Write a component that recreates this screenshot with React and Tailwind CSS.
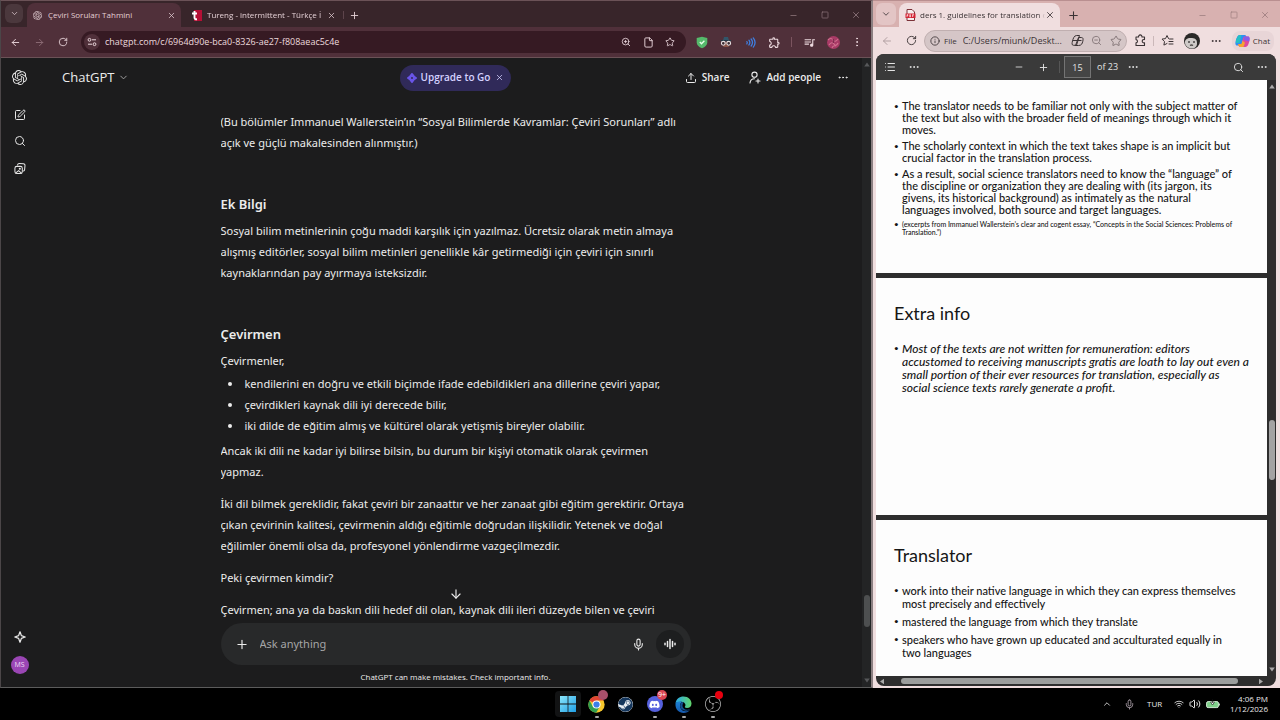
import {
  ArrowDown,
  ArrowLeft,
  ArrowRight,
  ChevronDown,
  ChevronUp,
  Ellipsis,
  EllipsisVertical,
  File,
  Info,
  List,
  Mic,
  Minus,
  Plus,
  RotateCw,
  Search,
  Square,
  SquarePen,
  Star,
  Upload,
  Volume2,
  Wifi,
  X,
  ZoomIn,
  ZoomOut,
} from "lucide-react";
import { FaDiscord, FaSteam } from "react-icons/fa";
import { MdOutlineExtension, MdOutlineQueueMusic } from "react-icons/md";
import { SiObsstudio, SiOpenai } from "react-icons/si";

const notes = {
  intro: [
    "(Bu bölümler Immanuel Wallerstein’ın “Sosyal Bilimlerde Kavramlar: Çeviri Sorunları” adlı",
    "açık ve güçlü makalesinden alınmıştır.)",
  ],
  extra: [
    "Sosyal bilim metinlerinin çoğu maddi karşılık için yazılmaz. Ücretsiz olarak metin almaya",
    "alışmış editörler, sosyal bilim metinleri genellikle kâr getirmediği için çeviri için sınırlı",
    "kaynaklarından pay ayırmaya isteksizdir.",
  ],
  translator: [
    "kendilerini en doğru ve etkili biçimde ifade edebildikleri ana dillerine çeviri yapar,",
    "çevirdikleri kaynak dili iyi derecede bilir,",
    "iki dilde de eğitim almış ve kültürel olarak yetişmiş bireyler olabilir.",
  ],
  however: [
    "Ancak iki dili ne kadar iyi bilirse bilsin, bu durum bir kişiyi otomatik olarak çevirmen",
    "yapmaz.",
  ],
  craft: [
    "İki dil bilmek gereklidir, fakat çeviri bir zanaattır ve her zanaat gibi eğitim gerektirir. Ortaya",
    "çıkan çevirinin kalitesi, çevirmenin aldığı eğitimle doğrudan ilişkilidir. Yetenek ve doğal",
    "eğilimler önemli olsa da, profesyonel yönlendirme vazgeçilmezdir.",
  ],
};

const context = [
  [
    "The translator needs to be familiar not only with the subject matter of",
    "the text but also with the broader field of meanings through which it",
    "moves.",
  ],
  [
    "The scholarly context in which the text takes shape is an implicit but",
    "crucial factor in the translation process.",
  ],
  [
    "As a result, social science translators need to know the “language” of",
    "the discipline or organization they are dealing with (its jargon, its",
    "givens, its historical background) as intimately as the natural",
    "languages involved, both source and target languages.",
  ],
];

const remuneration = [
  "Most of the texts are not written for remuneration: editors",
  "accustomed to receiving manuscripts gratis are loath to lay out even a",
  "small portion of their ever resources for translation, especially as",
  "social science texts rarely generate a profit.",
];

const translator = [
  [
    "work into their native language in which they can express themselves",
    "most precisely and effectively",
  ],
  ["mastered the language from which they translate"],
  [
    "speakers who have grown up educated and acculturated equally in",
    "two languages",
  ],
];

function Lines({ of }) {
  return of.map((line) => (
    <span key={line} className="block whitespace-nowrap">
      {line}
    </span>
  ));
}

function IconButton({ label, className = "w-6", children }) {
  return (
    <button type="button" aria-label={label} className={`flex shrink-0 items-center justify-center ${className}`}>
      {children}
    </button>
  );
}

function WindowControls({ className }) {
  return (
    <div className={`ml-auto flex ${className}`}>
      <IconButton label="Minimize" className="w-[31px]">
        <Minus size={9} />
      </IconButton>
      <IconButton label="Maximize" className="w-[31px]">
        <Square size={8} />
      </IconButton>
      <IconButton label="Close" className="w-[31px]">
        <X size={10} />
      </IconButton>
    </div>
  );
}

function SiteSettingsIcon() {
  return (
    <svg width="10" height="10" viewBox="0 0 10 10" fill="none" stroke="currentColor">
      <circle cx="2.5" cy="2.8" r="1.4" />
      <path d="M5 2.8h4M1 7.2h4" />
      <circle cx="7.5" cy="7.2" r="1.4" />
    </svg>
  );
}

function ShieldIcon() {
  return (
    <svg width="12" height="13" viewBox="0 0 12 13">
      <path d="M6 .8 11.3 2v4.2c0 2.8-2 4.8-5.3 6.1C2.7 11 .7 9 .7 6.2V2Z" fill="#55b96b" />
      <path d="m3.800 6 1.700 1.700 2.900-3" fill="none" stroke="#e7ffe9" strokeWidth="1.3" />
    </svg>
  );
}

function SpyIcon() {
  return (
    <svg width="12" height="12" viewBox="0 0 12 12">
      <path d="M3 4.500 4 1h4l1 3.500Z" fill="#31566a" />
      <path d="M.8 4.600h10.400" stroke="#243845" strokeWidth="1.2" />
      <path d="M2 6h8l-1.500 5H3.500Z" fill="#8a5347" />
      <circle cx="3.3" cy="7.3" r="1.9" fill="#3a2a30" stroke="#e8e0e2" strokeWidth="1.1" />
      <circle cx="8.7" cy="7.3" r="1.9" fill="#3a2a30" stroke="#e8e0e2" strokeWidth="1.1" />
    </svg>
  );
}

function SoundWavesIcon() {
  return (
    <svg width="11" height="11" viewBox="0 0 12 12" fill="none" stroke="#3f7fe0" strokeWidth="1.4" strokeLinecap="round">
      <path d="M2 5q1 1 0 2.500M4.300 3.500q2 2.500 0 5.200M6.700 2.200q3 3.800 0 7.600M9 1q4 5 0 10" />
    </svg>
  );
}

function PuzzleIcon() {
  return (
    <svg width="13" height="13" viewBox="0 0 13 13" fill="none" stroke="currentColor" strokeWidth="1.1" strokeLinejoin="round">
      <path d="M2 3h2.600a1.700 1.700 0 1 1 3.300 0h2.600v2.600a1.700 1.700 0 1 0 0 3.200v2.700H2V8.900c2-.3 2-3 0-3.300Z" />
    </svg>
  );
}

function FavoritesIcon() {
  return (
    <svg width="13" height="13" viewBox="0 0 13 13" fill="none" stroke="currentColor" strokeLinejoin="round" strokeLinecap="round">
      <path d="M7.500 4.500 6 1.500 4.500 4.600 1 5.100l2.500 2.500-.6 3.500L6 9.500M8.500 5h3.500M8 7.500h4M8 10h4" />
    </svg>
  );
}

function BrainIcon() {
  return (
    <svg width="13" height="13" viewBox="0 0 13 13" fill="none" stroke="currentColor" strokeLinejoin="round">
      <path d="M5.500 1.500h3l-3 9.800h-3c-2 0-1.500-2.300-1-4.300S3 1.500 5.500 1.500ZM7.500 11.500h-3l3-8h2.800c2 0 2 1.500 1.500 3.800-.6 2.400-1.300 4.200-4.300 4.200ZM2 6.500h8.500" />
    </svg>
  );
}

function CopilotIcon() {
  return (
    <svg width="15" height="14" viewBox="0 0 15 14">
      <path d="M4.500 1h5c1 0 1.600.6 2 1.800L12 4H8.500L7 9.500C6.500 11 6 11.500 5 11.500H2C.2 11.500.1 9 .8 6.500 1.600 3.500 2.500 1 4.500 1Z" fill="#2f8ff0" />
      <path d="M1 6 3 2q.6-1 1.500-1h2L4.500 9 1 9Z" fill="#25bfc4" />
      <path d="M10.500 13h-5c-1 0-1.600-.6-2-1.800L3.200 10h3.300L8 4.500C8.500 3 9 2.500 10 2.500h3c1.800 0 1.900 2.500 1.200 5-.8 3-1.700 5.500-3.700 5.500Z" fill="#e0489b" />
      <path d="M3.200 10h3.300l1-3.300 2.500 2-1.500 4.300h-3c-1 0-1.600-.6-2-1.800Z" fill="#f5a52f" />
      <path d="M9 3.200q.5-.7 1-.7h3c1.800 0 1.900 2.500 1.200 5L9 6Z" fill="#8a5be8" />
    </svg>
  );
}

function PdfIcon() {
  return (
    <svg width="11" height="12" viewBox="0 0 11 12">
      <path d="M2 .5h5L9.500 3v8.500H2Z" fill="#f7eeee" stroke="#7b3238" />
      <path d="M.5 4.500h10v4.500H.5Z" fill="#d32535" />
      <path d="M2 8V5.600h1v1H2M4.700 5.600V8h.8V5.600ZM7.500 8V5.600h1.500M7.500 6.800h1.200" fill="none" stroke="#fff" strokeWidth=".6" />
    </svg>
  );
}

function TurengIcon() {
  return (
    <svg width="11" height="11" viewBox="0 0 11 11">
      <path d="M3 0h8v11H3Z" fill="#b50f35" />
      <path d="M3.500 1v6.500q0 2 2.500 1.800M1 3.500h5" fill="none" stroke="#fff" strokeWidth="1.9" />
    </svg>
  );
}

function LibraryIcon() {
  return (
    <svg width="13" height="13" viewBox="0 0 13 13" fill="none" stroke="currentColor" strokeWidth="1.1" strokeLinecap="round" strokeLinejoin="round">
      <rect x="1" y="4.2" width="8" height="7.8" rx="2" />
      <path d="M3.800 2.700q.4-1.700 2-1.600l4.400.3q1.900.2 1.700 2l-.4 4.300q-.2 1.300-1.200 1.600M2 11.300l3-2.600 3 2.800" />
      <circle cx="6.3" cy="6.8" r=".6" />
    </svg>
  );
}

function AddPersonIcon() {
  return (
    <svg width="12" height="13" viewBox="0 0 12 13" fill="none" stroke="currentColor" strokeWidth="1.1" strokeLinecap="round">
      <circle cx="5.5" cy="3.7" r="2.6" />
      <path d="M1 12c.2-2.800 1.800-4.300 4.500-4.300M9 8v4M7 10h4" />
    </svg>
  );
}

function ChromeAvatar() {
  return (
    <svg width="13" height="13" viewBox="0 0 13 13">
      <circle cx="6.5" cy="6.5" r="6.5" fill="#a83a66" />
      <path d="M1 4q3-3 5 0t5-1M2 9q3-4 5-1t4-1M5 12q1-3 4-2" fill="none" stroke="#d0708f" strokeWidth="1.2" />
      <path d="M6 3q2 2 0 4" fill="none" stroke="#6d1f42" />
    </svg>
  );
}

function EdgeAvatar() {
  return (
    <svg width="16" height="16" viewBox="0 0 16 16">
      <circle cx="8" cy="8" r="8" fill="#2b2928" />
      <path d="M1 10C.5 6 4 4.500 8 5s5 2 5 5.500-2.500 5-5 5-6.500-1.500-7-5.500Z" fill="#cfcac8" />
      <path d="M4 9h2M9 9h2M6 12.500q1.500-1 3 0" stroke="#4b4745" strokeWidth="1.3" fill="none" />
    </svg>
  );
}

function WindowsIcon() {
  return (
    <svg width="16" height="16" viewBox="0 0 16 16">
      <defs>
        <linearGradient id="win" x2="1" y2="1">
          <stop stopColor="#8be6fb" />
          <stop offset="1" stopColor="#1f9fe6" />
        </linearGradient>
      </defs>
      <path d="M0 0h7.600v7.600H0ZM8.400 0H16v7.600H8.400ZM0 8.400h7.600V16H0ZM8.400 8.400H16V16H8.400Z" fill="url(#win)" />
    </svg>
  );
}

function ChromeIcon() {
  return (
    <svg width="17" height="17" viewBox="0 0 48 48">
      <circle cx="24" cy="24" r="23" fill="#f7c72c" />
      <path d="M24 24 4 12.500A23 23 0 0 1 44 12.500H24Z" fill="#e04434" />
      <path d="M4 12.500A23 23 0 0 0 23 47l10-17-19 0Z" fill="#2f9e4f" />
      <circle cx="24" cy="24" r="11.5" fill="#fff" />
      <circle cx="24" cy="24" r="8.8" fill="#3b7fe8" />
    </svg>
  );
}

function EdgeIcon() {
  return (
    <svg width="17" height="17" viewBox="0 0 34 34">
      <defs>
        <linearGradient id="edgeTop" x2="1">
          <stop stopColor="#2aa9e8" />
          <stop offset="1" stopColor="#62d66a" />
        </linearGradient>
        <linearGradient id="edgeLow" x2="0" y2="1">
          <stop stopColor="#1c83d6" />
          <stop offset="1" stopColor="#1557ac" />
        </linearGradient>
      </defs>
      <path d="M1 15C2 6 9 1 17 1c10 0 16 7 16 14 0 6-4 9-9 9-4 0-5-2-4-3 2-2 1-8-5-9-6-1-12 1-14 3Z" fill="url(#edgeTop)" />
      <path d="M1 15c3-4 9-5 13-3-4 2-5 7-3 12s8 8 15 6c1 0 3-2 4-2-3 4-8 6-13 6C8 34 0 27 1 15Z" fill="url(#edgeLow)" />
      <path d="M14 12c-4 3-5 8-2 13 3 4 12 7 19 1-9 4-16-1-16-6 0-3 1-5 2-7Z" fill="#135093" />
    </svg>
  );
}

function BatteryIcon() {
  return (
    <svg width="14" height="10" viewBox="0 0 14 10">
      <rect x=".6" y="2.6" width="11.8" height="6" rx="1.5" fill="#7fcf8a" stroke="#cfe8d2" />
      <path d="M13.400 4.500v2" stroke="#cfe8d2" />
      <path d="M6.500 0v4M4.500 3h4l-2 3Z" fill="#fff" stroke="#101010" strokeWidth=".6" />
    </svg>
  );
}

function Triangle({ className }) {
  return (
    <svg width="6" height="5" viewBox="0 0 6 5" fill="currentColor" className={`shrink-0 ${className}`}>
      <path d="M3 .5 5.800 4.500H.2Z" />
    </svg>
  );
}

function ChromeWindow() {
  return (
    <section className="flex min-h-0 min-w-0 flex-col overflow-hidden border-t border-r-2 border-b border-l border-t-[#6b5257] border-r-[#8b7f81] border-b-[#5c5c5c] border-l-[#4b4648] bg-[#1c1c1d]">
      <div className="flex h-[26px] shrink-0 items-end bg-[#38252a] pl-1 text-[#e3cfd4]">
        <IconButton label="Search tabs" className="mb-1 h-[19px] w-[18px] rounded-md bg-[#4b383d]">
          <ChevronDown size={9} />
        </IconButton>
        <div className="ml-1 flex h-6 w-[154px] items-center rounded-t-lg bg-[#50303a] pr-[5px] pl-[6px]">
          <SiOpenai size={9} />
          <span className="ml-[6px] flex-1 truncate text-[8px]">Çeviri Soruları Tahmini</span>
          <IconButton label="Close tab" className="w-[10px]">
            <X size={9} />
          </IconButton>
        </div>
        <div className="flex h-6 w-[162px] items-center pr-[7px] pl-[10px]">
          <TurengIcon />
          <span className="ml-[5px] flex-1 overflow-hidden mask-r-from-95% text-[8px] whitespace-nowrap">
            Tureng - intermittent - Türkçe İ
          </span>
          <IconButton label="Close tab" className="w-[10px]">
            <X size={9} />
          </IconButton>
        </div>
        <span className="mb-2 h-2 w-px bg-[#5d444b]" />
        <IconButton label="New tab" className="h-6 w-5">
          <Plus size={11} />
        </IconButton>
        <WindowControls className="h-6 text-[#92797f]" />
      </div>

      <div className="flex h-[31px] shrink-0 items-center border-b border-[#6b5257] bg-[#50303a] pr-[2px] pl-[2px] text-[#ecd9de]">
        <IconButton label="Back">
          <ArrowLeft size={11} />
        </IconButton>
        <IconButton label="Forward" className="w-6 text-[#8d6c76]">
          <ArrowRight size={11} />
        </IconButton>
        <IconButton label="Reload">
          <RotateCw size={10} />
        </IconButton>
        <div className="ml-[6px] flex h-[22px] min-w-0 flex-1 items-center rounded-full bg-[#361a23] pr-[5px] pl-[3px]">
          <IconButton label="Site information" className="size-4 rounded-full bg-[#50303a]">
            <SiteSettingsIcon />
          </IconButton>
          <input
            aria-label="Address"
            defaultValue="chatgpt.com/c/6964d90e-bca0-8326-ae27-f808aeac5c4e"
            className="ml-[5px] min-w-0 flex-1 bg-transparent text-[9px] outline-none"
          />
          <IconButton label="Zoom" className="w-[22px]">
            <ZoomIn size={10} />
          </IconButton>
          <IconButton label="Page" className="w-[22px]">
            <File size={11} />
          </IconButton>
          <IconButton label="Bookmark" className="w-[22px]">
            <Star size={10} />
          </IconButton>
        </div>
        <div className="ml-1 flex items-center">
          <IconButton label="Ad blocker">
            <ShieldIcon />
          </IconButton>
          <IconButton label="Privacy">
            <SpyIcon />
          </IconButton>
          <IconButton label="Read aloud">
            <SoundWavesIcon />
          </IconButton>
          <IconButton label="Extensions">
            <MdOutlineExtension size={13} />
          </IconButton>
          <span className="mx-[5px] h-[10px] w-px bg-[#7b545f]" />
          <IconButton label="Media">
            <MdOutlineQueueMusic size={13} />
          </IconButton>
          <IconButton label="Profile">
            <ChromeAvatar />
          </IconButton>
          <IconButton label="Menu">
            <EllipsisVertical size={12} />
          </IconButton>
        </div>
      </div>

      <div className="flex min-h-0 flex-1">
        <ChatRail />
        <Chat />
        <div className="flex w-[9px] shrink-0 flex-col items-center bg-[#232425] py-1 text-[#57585a]">
          <Triangle className="rotate-0" />
          <span className="mt-auto mb-[51px] h-8 w-[6px] rounded-full bg-[#4d4f50]" />
          <Triangle className="rotate-180" />
        </div>
      </div>
    </section>
  );
}

function ChatRail() {
  return (
    <nav className="flex w-12 shrink-0 flex-col items-center pt-[11px] pr-[11px] pb-[13px] text-[#e6e6e6]">
      <IconButton label="Home" className="size-4">
        <SiOpenai size={15} />
      </IconButton>
      <IconButton label="New chat" className="mt-6 size-3">
        <SquarePen size={12} />
      </IconButton>
      <IconButton label="Search chats" className="mt-[14px] size-3">
        <Search size={12} />
      </IconButton>
      <IconButton label="Images" className="mt-[15px] size-3">
        <LibraryIcon />
      </IconButton>
      <IconButton label="Upgrade" className="mt-auto size-3">
        <svg width="12" height="12" viewBox="0 0 12 12" fill="none" stroke="currentColor" strokeWidth="1.3" strokeLinejoin="round">
          <path d="M6 .8 7.400 4.600 11.200 6 7.400 7.400 6 11.200 4.600 7.400.8 6l3.800-1.400Z" />
        </svg>
      </IconButton>
      <button type="button" className="mt-[13px] size-[18px] shrink-0 rounded-full bg-[#9a46b4] text-[7px] leading-[18px] text-[#f0dff5]">
        MS
      </button>
    </nav>
  );
}

function Chat() {
  return (
    <main className="flex min-w-0 flex-1 flex-col text-[#ececec]">
      <header className="flex h-[39px] shrink-0 items-center px-[13px]">
        <div className="flex-1">
          <button type="button" className="flex items-center gap-1 text-[13px]">
            ChatGPT
            <ChevronDown size={11} className="text-[#a9a9a9]" />
          </button>
        </div>
        <div className="flex h-[26px] items-center gap-1 rounded-full bg-[#302a59] px-[7px] text-[#d5d2ff]">
          <svg width="10" height="10" viewBox="0 0 10 10">
            <path d="M5 1Q6.500 3.500 9 5 6.500 6.500 5 9 3.500 6.500 1 5 3.500 3.500 5 1Z" fill="#6a55e8" stroke="#6a55e8" strokeWidth="2" strokeLinejoin="round" />
            <circle cx="5" cy="5" r="1" fill="#302a59" />
          </svg>
          <button type="button" className="text-[10px] font-semibold">
            Upgrade to Go
          </button>
          <IconButton label="Dismiss" className="w-[10px]">
            <X size={9} />
          </IconButton>
        </div>
        <div className="flex flex-1 items-center justify-end text-[10px] font-semibold">
          <button type="button" className="flex items-center gap-[5px]">
            <Upload size={12} />
            Share
          </button>
          <button type="button" className="ml-5 flex items-center gap-[5px]">
            <AddPersonIcon />
            Add people
          </button>
          <IconButton label="More" className="ml-4 w-3">
            <Ellipsis size={13} />
          </IconButton>
        </div>
      </header>

      <article className="mx-auto min-h-0 w-full max-w-[470px] flex-1 overflow-hidden pt-[14px] font-['Noto_Sans','Open_Sans',sans-serif] text-[11px] leading-[21px]">
        <p>
          <Lines of={notes.intro} />
        </p>
        <h2 className="mt-[39px] text-[13px] leading-6 font-semibold">Ek Bilgi</h2>
        <p className="mt-1">
          <Lines of={notes.extra} />
        </p>
        <h2 className="mt-[39px] text-[13px] leading-6 font-semibold">Çevirmen</h2>
        <p className="mt-1">Çevirmenler,</p>
        <ul className="mt-[2px] pl-6">
          {notes.translator.map((item) => (
            <li key={item} className="relative whitespace-nowrap">
              <span className="absolute top-[9px] -left-[17px] size-1 rounded-full bg-current" />
              {item}
            </li>
          ))}
        </ul>
        <p className="mt-1">
          <Lines of={notes.however} />
        </p>
        <p className="mt-[11px]">
          <Lines of={notes.craft} />
        </p>
        <p className="mt-[11px]">Peki çevirmen kimdir?</p>
        <p className="mt-[11px] whitespace-nowrap">
          Çevirmen; ana ya da baskın dili hedef dil olan, kaynak dili ileri düzeyde bilen ve çeviri
        </p>
      </article>

      <footer className="relative mx-auto w-full max-w-[470px] shrink-0">
        <button type="button" aria-label="Scroll to bottom" className="absolute -top-9 left-1/2 -translate-x-1/2">
          <ArrowDown size={14} />
        </button>
        <form className="flex h-[42px] items-center rounded-full bg-[#28292a] pr-[7px] pl-[14px]">
          <IconButton label="Add files" className="w-[14px]">
            <Plus size={15} />
          </IconButton>
          <input
            aria-label="Message"
            placeholder="Ask anything"
            className="ml-[11px] min-w-0 flex-1 bg-transparent font-['Noto_Sans','Open_Sans',sans-serif] text-[11px] outline-none placeholder:text-[#a5a6a7]"
          />
          <IconButton label="Dictate" className="w-4">
            <Mic size={13} />
          </IconButton>
          <IconButton label="Voice mode" className="ml-[9px] size-7 rounded-full bg-[#1d1e1f]">
            <svg width="12" height="12" viewBox="0 0 12 12" stroke="currentColor" strokeWidth="1.5" strokeLinecap="round">
              <path d="M1 5.200v1.600M3.500 3.500v5M6 1.500v9M8.500 3.500v5M11 5.200v1.600" />
            </svg>
          </IconButton>
        </form>
        <p className="pt-[6px] pb-1 text-center text-[8px] leading-3">ChatGPT can make mistakes. Check important info.</p>
      </footer>
    </main>
  );
}

function EdgeWindow() {
  return (
    <section className="flex min-h-0 min-w-0 flex-col overflow-hidden border-t border-[#b98f90] bg-[#f0dedf] text-[#3b3335]">
      <div className="flex h-[26px] shrink-0 items-end bg-[#d8b1b0]">
        <IconButton label="Tab actions" className="mb-[2px] ml-[3px] h-[22px] w-5 rounded-md bg-[#e3c5c5]">
          <ChevronDown size={10} />
        </IconButton>
        <div className="ml-[3px] flex h-6 w-[161px] items-center rounded-t-lg bg-[#f0dedf] pr-[5px] pl-[6px]">
          <PdfIcon />
          <span className="ml-1 flex-1 overflow-hidden mask-r-from-95% text-[8px] whitespace-nowrap">
            ders 1. guidelines for translation o
          </span>
          <IconButton label="Close tab" className="w-[10px]">
            <X size={10} />
          </IconButton>
        </div>
        <IconButton label="New tab" className="h-6 w-[26px]">
          <Plus size={13} />
        </IconButton>
        <WindowControls className="h-6 text-[#9b7c7d]" />
      </div>

      <div className="flex h-[27px] shrink-0 items-center pl-[2px]">
        <IconButton label="Back" className="w-6 text-[#b3a1a3]">
          <ArrowLeft size={12} />
        </IconButton>
        <IconButton label="Refresh">
          <RotateCw size={11} />
        </IconButton>
        <div className="ml-[1px] flex h-[22px] min-w-0 flex-1 items-center rounded-full border border-[#c0afb0] bg-[#d5c6c7] pl-[5px]">
          <Info size={10} />
          <span className="ml-1 text-[8px]">File</span>
          <input
            aria-label="Address"
            defaultValue="C:/Users/miunk/Deskt..."
            className="ml-[6px] min-w-0 flex-1 bg-transparent text-[9px] outline-none"
          />
          <IconButton label="Copilot summary" className="w-[18px]">
            <BrainIcon />
          </IconButton>
          <IconButton label="Zoom out" className="w-[19px] text-[#857779]">
            <ZoomOut size={11} />
          </IconButton>
          <IconButton label="Add favorite" className="w-5 text-[#857779]">
            <Star size={12} />
          </IconButton>
        </div>
        <IconButton label="Extensions" className="ml-[2px] w-6">
          <PuzzleIcon />
        </IconButton>
        <span className="h-[10px] w-px bg-[#cbb8b9]" />
        <IconButton label="Favorites" className="ml-[2px] w-6">
          <FavoritesIcon />
        </IconButton>
        <IconButton label="Profile">
          <EdgeAvatar />
        </IconButton>
        <IconButton label="Settings and more">
          <Ellipsis size={12} />
        </IconButton>
        <button type="button" className="mr-[6px] ml-1 flex h-5 items-center gap-[3px] rounded-lg bg-[#e8d5d7] pr-1 pl-[3px] text-[8px]">
          <CopilotIcon />
          Chat
        </button>
      </div>

      <div className="mr-1 mb-[2px] ml-[3px] flex min-h-0 flex-1 flex-col overflow-hidden rounded-lg bg-[#2e2e2e]">
        <div className="grid h-[26px] shrink-0 grid-cols-[1fr_auto_1fr] items-center bg-[#3a3a3a] text-[#e4e4e4]">
          <div className="flex pl-[2px]">
            <IconButton label="Contents">
              <List size={12} />
            </IconButton>
            <IconButton label="More tools">
              <Ellipsis size={12} />
            </IconButton>
          </div>
          <div className="flex items-center">
            <IconButton label="Zoom out">
              <Minus size={10} />
            </IconButton>
            <IconButton label="Zoom in">
              <Plus size={11} />
            </IconButton>
            <span className="mx-1 h-3 w-px bg-[#565656]" />
            <input
              aria-label="Page number"
              defaultValue="15"
              className="h-[22px] w-[27px] border border-[#747474] bg-[#454545] text-center text-[9px] outline-none"
            />
            <span className="ml-[6px] w-[24px] text-[9px] whitespace-nowrap">of 23</span>
            <IconButton label="Page view">
              <Ellipsis size={12} />
            </IconButton>
          </div>
          <div className="flex justify-end pr-[2px]">
            <IconButton label="Find">
              <Search size={11} />
            </IconButton>
            <IconButton label="More actions">
              <Ellipsis size={12} />
            </IconButton>
          </div>
        </div>
        <div className="flex min-h-0 flex-1">
          <Slides />
          <div className="flex w-[9px] shrink-0 flex-col items-center py-1 text-[#a9a9a9]">
            <Triangle className="rotate-0" />
            <span className="mt-auto mb-[187px] h-[60px] w-[6px] rounded-full bg-[#a3a3a3]" />
            <Triangle className="rotate-180" />
          </div>
        </div>
        <div className="flex h-[10px] shrink-0 items-center pr-[12px] pl-[3px] text-[#a9a9a9]">
          <Triangle className="-rotate-90" />
          <span className="mr-5 ml-4 h-[6px] flex-1 rounded-full bg-[#9c9e9d]" />
          <Triangle className="rotate-90" />
        </div>
      </div>
    </section>
  );
}

function Bullet({ className = "", children }) {
  return (
    <li className={`flex gap-1 ${className}`}>
      <span className="w-1 text-[8px] not-italic">•</span>
      <div>{children}</div>
    </li>
  );
}

function Slides() {
  return (
    <div className="flex min-w-0 flex-1 flex-col gap-[5px] overflow-hidden font-['Lato','Liberation_Sans',sans-serif] text-[11px] font-medium text-[#161616] *:bg-[#fdfdfd] *:pl-[18px]">
      <section className="h-[193px] shrink-0 pt-5">
        <ul className="flex flex-col gap-1 leading-3">
          {context.map((item) => (
            <Bullet key={item[0]}>
              <Lines of={item} />
            </Bullet>
          ))}
          <Bullet className="text-[7px] leading-2">
            <Lines
              of={[
                "(excerpts from Immanuel Wallerstein’s clear and cogent essay, “Concepts in the Social Sciences: Problems of",
                "Translation.”)",
              ]}
            />
          </Bullet>
        </ul>
      </section>
      <section className="h-[237px] shrink-0 pt-[23px]">
        <h2 className="text-[18px] leading-6 font-normal">Extra info</h2>
        <ul className="mt-[17px] text-[12px] leading-[13px]">
          <Bullet className="italic">
            <Lines of={remuneration} />
          </Bullet>
        </ul>
      </section>
      <section className="flex-1 pt-[23px]">
        <h2 className="text-[18px] leading-6 font-normal">Translator</h2>
        <ul className="mt-[17px] flex flex-col gap-[5px] leading-[13px]">
          {translator.map((item) => (
            <Bullet key={item[0]}>
              <Lines of={item} />
            </Bullet>
          ))}
        </ul>
      </section>
    </div>
  );
}

function TaskbarApp({ label, running, children }) {
  return (
    <button type="button" aria-label={label} className="relative flex h-7 w-[29px] items-center justify-center">
      {children}
      {running && <span className="absolute bottom-0 h-[2px] w-1 rounded-full bg-[#a8a8a8]" />}
    </button>
  );
}

function Taskbar() {
  return (
    <footer className="grid h-8 shrink-0 grid-cols-[1fr_auto_1fr] items-center bg-black text-[#e8e8e8]">
      <div />
      <div className="flex items-center">
        <TaskbarApp label="Start">
          <span className="flex size-[26px] items-center justify-center rounded bg-[#121314]">
            <WindowsIcon />
          </span>
        </TaskbarApp>
        <TaskbarApp label="Chrome" running>
          <ChromeIcon />
          <span className="absolute top-0 right-[3px] size-[10px] rounded-full bg-[#a8506c]" />
        </TaskbarApp>
        <TaskbarApp label="Steam">
          <FaSteam size={15} className="rounded-full bg-[#e9eef3] text-[#14365c]" />
        </TaskbarApp>
        <TaskbarApp label="Discord" running>
          <span className="flex size-4 items-center justify-center rounded-full bg-[#5560dd]">
            <FaDiscord size={11} className="text-white" />
          </span>
          <span className="absolute top-0 right-[2px] flex size-[10px] items-center justify-center rounded-full bg-[#d94452] text-[7px] text-white">
            9+
          </span>
        </TaskbarApp>
        <TaskbarApp label="Edge" running>
          <EdgeIcon />
        </TaskbarApp>
        <TaskbarApp label="OBS Studio" running>
          <SiObsstudio size={16} className="text-[#b9b9b9]" />
          <span className="absolute top-[1px] right-1 size-2 rounded-full bg-[#e8000f]" />
        </TaskbarApp>
      </div>
      <div className="flex items-center justify-end pr-3">
        <IconButton label="Hidden icons" className="w-5">
          <ChevronUp size={10} />
        </IconButton>
        <IconButton label="Microphone">
          <Mic size={11} className="text-[#a89da6]" />
        </IconButton>
        <span className="w-[27px] text-center text-[8px]">TUR</span>
        <button type="button" aria-label="Quick settings" className="flex items-center gap-[5px] pr-[10px] pl-[6px]">
          <Wifi size={10} />
          <Volume2 size={12} />
          <BatteryIcon />
        </button>
        <div className="text-right text-[8px] leading-[10px]">
          <p>4:06 PM</p>
          <p>1/12/2026</p>
        </div>
      </div>
    </footer>
  );
}

function App() {
  return (
    <div className="flex h-screen flex-col overflow-hidden bg-black font-['Open_Sans','Noto_Sans',sans-serif]">
      <div className="grid min-h-0 flex-1 grid-cols-[873fr_407fr]">
        <ChromeWindow />
        <EdgeWindow />
      </div>
      <Taskbar />
    </div>
  );
}

export default App;
